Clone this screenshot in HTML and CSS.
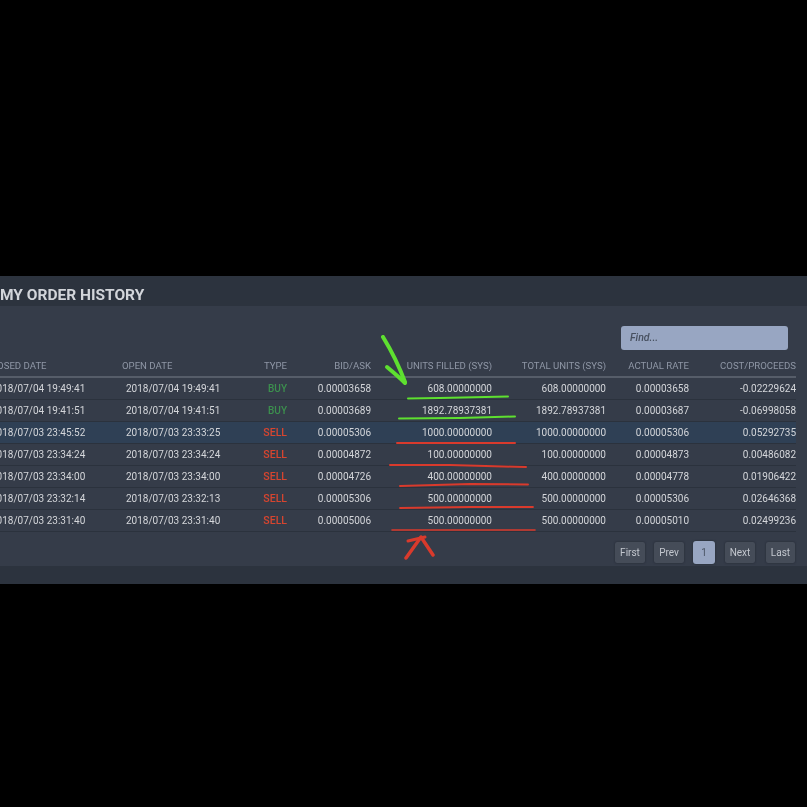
FILE: index.html
```html
<!DOCTYPE html>
<html lang="en">
<head>
<meta charset="utf-8">
<title>My Order History</title>
<link rel="stylesheet" href="styles.css">
</head>
<body>
<main class="stage">
  <section class="panel">
    <h1 class="title">MY ORDER HISTORY</h1>
    <div class="body">
      <div class="tools"><div class="find">Find...</div></div>
      <table class="orders">
        <colgroup><col class="c1"><col class="c2"><col class="c3"><col class="c4"><col class="c5"><col class="c6"><col class="c7"><col class="c8"></colgroup>
        <thead>
          <tr><th class="l">CLOSED DATE</th><th class="l">OPEN DATE</th><th>TYPE</th><th>BID/ASK</th><th>UNITS FILLED (SYS)</th><th>TOTAL UNITS (SYS)</th><th>ACTUAL RATE</th><th>COST/PROCEEDS</th></tr>
        </thead>
        <tbody>
          <tr><td class="d">2018/07/04 19:49:41</td><td class="d2">2018/07/04 19:49:41</td><td class="buy">BUY</td><td>0.00003658</td><td>608.00000000</td><td>608.00000000</td><td>0.00003658</td><td>-0.02229624</td></tr>
          <tr><td class="d">2018/07/04 19:41:51</td><td class="d2">2018/07/04 19:41:51</td><td class="buy">BUY</td><td>0.00003689</td><td>1892.78937381</td><td>1892.78937381</td><td>0.00003687</td><td>-0.06998058</td></tr>
          <tr class="hl"><td class="d">2018/07/03 23:45:52</td><td class="d2">2018/07/03 23:33:25</td><td class="sell">SELL</td><td>0.00005306</td><td>1000.00000000</td><td>1000.00000000</td><td>0.00005306</td><td>0.05292735</td></tr>
          <tr><td class="d">2018/07/03 23:34:24</td><td class="d2">2018/07/03 23:34:24</td><td class="sell">SELL</td><td>0.00004872</td><td>100.00000000</td><td>100.00000000</td><td>0.00004873</td><td>0.00486082</td></tr>
          <tr><td class="d">2018/07/03 23:34:00</td><td class="d2">2018/07/03 23:34:00</td><td class="sell">SELL</td><td>0.00004726</td><td>400.00000000</td><td>400.00000000</td><td>0.00004778</td><td>0.01906422</td></tr>
          <tr><td class="d">2018/07/03 23:32:14</td><td class="d2">2018/07/03 23:32:13</td><td class="sell">SELL</td><td>0.00005306</td><td>500.00000000</td><td>500.00000000</td><td>0.00005306</td><td>0.02646368</td></tr>
          <tr><td class="d">2018/07/03 23:31:40</td><td class="d2">2018/07/03 23:31:40</td><td class="sell">SELL</td><td>0.00005006</td><td>500.00000000</td><td>500.00000000</td><td>0.00005010</td><td>0.02499236</td></tr>
        </tbody>
      </table>
      <nav class="pager">
        <span class="pg p-first">First</span><span class="pg p-prev">Prev</span><span class="pg cur">1</span><span class="pg p-next">Next</span><span class="pg p-last">Last</span>
      </nav>
    </div>
    <div class="foot"></div>
    <svg class="marks" width="807" height="308" viewBox="0 276 807 308" aria-hidden="true">
      <g class="green">
        <path d="M383 337 C391 350 399 366 405 382" stroke-width="4"/>
        <path d="M387 367 C393 372 400 378 405 383" stroke-width="4"/>
        <path d="M408 398.500 L440 398 L508 396.500" stroke-width="2"/>
        <path d="M399 418.500 L460 418 L515 416.500" stroke-width="2"/>
      </g>
      <g class="red">
        <path d="M397 443 L450 443 L515 443" stroke-width="2"/>
        <path d="M390 465 L450 465 L526 467" stroke-width="2"/>
        <path d="M400 486 L470 484 L528 484.500" stroke-width="2"/>
        <path d="M400 508 L470 507 L533 507" stroke-width="1.800"/>
        <path d="M392 530 L460 530 L535 530" stroke-width="1.600"/>
        <path d="M406 558 L421 537 L433 555" stroke-width="3.500"/>
        <path d="M408 541 L425 537" stroke-width="3"/>
      </g>
    </svg>
  </section>
</main>
</body>
</html>
```
FILE: styles.css
```css
* { box-sizing: border-box; }
html, body { margin: 0; background: #000; }
body { width: 807px; height: 807px; overflow: hidden; font-family: Roboto, "Liberation Sans", sans-serif; }
.stage { padding-top: 276px; }
.panel { position: relative; width: 807px; height: 308px; background: #2c333e; overflow: hidden; }
.title { margin: 0; height: 30px; font-size: 15.500px; line-height: 39px; font-weight: 700; color: #d2d5da; filter: blur(.4px); }
.body { height: 260px; background: #353c49; }
.tools { display: flex; justify-content: flex-end; height: 50px; padding: 20px 19px 0 0; }
.find { width: 167px; height: 24px; background: #98a6c2; border-radius: 3px; padding-left: 9px; font-size: 10.500px; line-height: 24px; font-style: italic; color: #47505f; font-weight: 500; filter: blur(.3px); }
.orders { margin-left: -14px; width: 810px; table-layout: fixed; border-collapse: collapse; font-size: 10px; filter: blur(.4px); }
.c1 { width: 136px; } .c2 { width: 126px; } .c3 { width: 39px; } .c4 { width: 84px; } .c5 { width: 121px; } .c6 { width: 114px; } .c7 { width: 83px; } .c8 { width: 107px; }
.orders th { height: 21px; padding: 0 0 2px; text-align: right; font-weight: 400; color: #8f97a6; border-bottom: 2px solid #565d69; font-size: 9.600px; }
.orders th.l { text-align: left; }
.orders td { height: 22px; padding: 0; text-align: right; color: #d4d6da; border-bottom: 1px solid #2b323d; }
.orders td.d { text-align: left; padding-left: 5px; }
.orders td.d2 { text-align: left; padding-left: 4px; }
.orders td.buy { color: #3c8f4e; font-weight: 500; }
.orders td.sell { color: #d8452f; font-weight: 500; font-size: 10.500px; }
.hl td { background: #2f4055; }
.pager { display: flex; height: 22px; margin-top: 10px; padding-right: 12px; justify-content: flex-end; }
.pg { height: 21px; padding: 0 2px; background: #454c58; color: #c3c7ce; border-radius: 2px; font-size: 10px; line-height: 21px; text-align: center; box-shadow: 0 0 2px #20262f; filter: blur(.3px); }
.p-first { width: 30px; margin-right: 9px; }
.p-prev { width: 30px; margin-right: 9px; }
.cur { width: 22px; margin-right: 10px; background: #98a6c2; color: #4a5464; border-radius: 3px; height: 23px; margin-top: -1px; line-height: 23px; }
.p-next { width: 30px; margin-right: 11px; }
.p-last { width: 29px; }
.foot { height: 18px; background: #2c333e; }
.marks { position: absolute; left: 0; top: 0; pointer-events: none; filter: blur(.4px); }
.marks path { fill: none; stroke-linecap: round; stroke-linejoin: round; }
.green path { stroke: #5ee030; }
.red path { stroke: #d93a2c; }
```
